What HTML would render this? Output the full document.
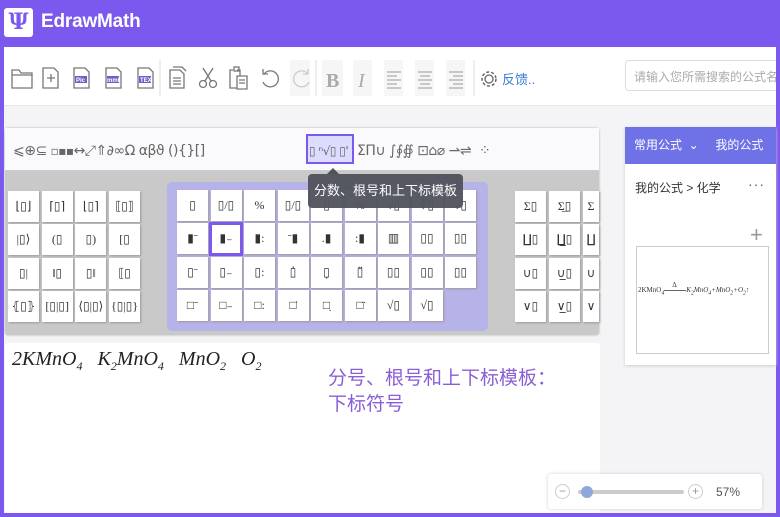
<!DOCTYPE html>
<html><head><meta charset="utf-8">
<style>
*{margin:0;padding:0;box-sizing:border-box}
body{width:780px;height:517px;overflow:hidden;background:#7b58ee;font-family:"Liberation Sans","Noto Sans CJK SC",sans-serif;position:relative}
.abs{position:absolute}
#main{left:4px;top:47px;width:772px;height:466px;background:#f4f4f6}
#tb{left:4px;top:47px;width:772px;height:59px;background:#fff;border-bottom:1px solid #e6e6e6}
.cell{position:absolute;width:31px;height:31px;background:#fff;box-shadow:1px 1px 2px #999;font-family:"Liberation Serif","DejaVu Sans",serif;font-size:12px;color:#333;display:flex;align-items:center;justify-content:center}
.sym{position:absolute;top:143px;font-size:14px;color:#666;font-family:"DejaVu Sans",sans-serif;letter-spacing:-0.5px}
</style></head><body>
<div class="abs" style="left:4px;top:8px;width:29px;height:29px;background:#fff;border-radius:3px;color:#7b58ee;font:bold 22px 'DejaVu Serif',serif;text-align:center;line-height:29px">Ψ</div>
<div class="abs" style="left:41px;top:11px;color:#fff;font-size:19px;font-weight:bold;letter-spacing:-0.2px">EdrawMath</div>
<div id="main" class="abs"></div>
<div id="tb" class="abs"></div>
<svg class="abs" style="left:0;top:60px" width="620" height="40">
 <g fill="none" stroke="#777" stroke-width="1.3">
  <path d="M12 10h7l2 3h11v15H12z"/><path d="M12 15h20"/>
  <path d="M43 8h11l4 4v16H43z"/><path d="M47 18h8M51 14v8"/>
  <path d="M74 8h11l4 4v16H74z"/><path d="M106 8h11l4 4v16h-15z"/><path d="M138 8h11l4 4v16h-15z"/>
  <path d="M170 10h10l4 4v14h-14z"/><path d="M173 7h9l4 4"/><path d="M173 18h8M173 21h8M173 24h8"/>
  <circle cx="203" cy="24" r="3.5"/><circle cx="213" cy="24" r="3.5"/><path d="M205 21l8-13M211 21l-8-13"/>
  <path d="M233 10h-3v18h7M237 10h3v6"/><rect x="234" y="7" width="5" height="4"/><path d="M237 16h10v13h-10z"/><path d="M239 20h6M239 23h6"/>
  <path d="M264 14a8 8 0 1 1-1 8M263 9v5h5"/>
 </g>
 <g fill="#6b5fc9"><rect x="75" y="16" width="12" height="7"/><rect x="107" y="16" width="12" height="7"/><rect x="139" y="16" width="12" height="7"/></g>
 <g fill="#fff" font-size="6" font-family="Liberation Sans" font-weight="bold"><text x="76" y="22">Pic</text><text x="107" y="22">mml</text><text x="140" y="22">TEX</text></g>
 <rect x="290" y="0" width="20" height="36" fill="#f6f6f6"/>
 <path d="M308 14a8 8 0 1 0 1 8M308 9v5h-5" fill="none" stroke="#ccc" stroke-width="1.3"/>
 <path d="M160 0v36M316 0v36M474 0v36" stroke="#ddd"/>
 <rect x="322" y="0" width="21" height="36" fill="#f6f6f6"/><rect x="353" y="0" width="19" height="36" fill="#f6f6f6"/><rect x="384" y="0" width="19" height="36" fill="#f6f6f6"/><rect x="415" y="0" width="19" height="36" fill="#f6f6f6"/><rect x="446" y="0" width="19" height="36" fill="#f6f6f6"/>
 <text x="326" y="27" font-family="Liberation Serif" font-weight="bold" font-size="20" fill="#aaa">B</text>
 <text x="358" y="27" font-family="Liberation Serif" font-style="italic" font-size="20" fill="#aaa">I</text>
 <g stroke="#999" stroke-width="1"><path d="M387 12h14M387 16h10M387 20h14M387 24h10M387 28h14"/><path d="M418 12h14M420 16h10M418 20h14M420 24h10M418 28h14"/><path d="M449 12h14M453 16h10M449 20h14M453 24h10M449 28h14"/></g>
 <circle cx="489" cy="19" r="4" fill="none" stroke="#666" stroke-width="1.3"/><circle cx="489" cy="19" r="7" fill="none" stroke="#666" stroke-width="1.5" stroke-dasharray="3 2"/>
</svg>
<div class="abs" style="left:502px;top:69px;font-size:13px;color:#3a7bd5">反馈..</div>
<div class="abs" style="left:625px;top:60px;width:151px;height:31px;border:1px solid #ddd;border-right:0;border-radius:4px 0 0 4px;background:#fff;font-size:12px;color:#aaa;padding:7px 0 0 8px;white-space:nowrap;overflow:hidden">请输入您所需搜索的公式名称</div>
<div class="abs" style="left:5px;top:128px;width:594px;height:207px;background:#c9c9c9;border-radius:3px;box-shadow:0 0 2px #aaa"></div>
<div class="abs" style="left:5px;top:128px;width:594px;height:43px;background:#fafafc;border-bottom:1px solid #ccc"></div>
<div class="sym" style="left:13px">⩽⊕⊆ <span style="font-size:12px">▫▪▪</span>↔⤢⇑∂∞Ω αβϑ (){}[]</div>
<div class="abs" style="left:306px;top:134px;width:48px;height:30px;border:2px solid #7b58ee;background:#dcdcff"></div>
<div class="sym" style="left:309px;font-size:12px;top:144px">▯ ⁿ√▯ ▯'</div>
<div class="sym" style="left:357px">ΣΠ∪ ∫∮∯ ⊡⌂⌀ ⇀⇌ &nbsp;⁘</div>
<div class="abs" style="left:167px;top:182px;width:321px;height:149px;background:#b6b3e8;border-radius:5px"></div>
<div id="cells"></div>
<div class="abs" style="left:308px;top:174px;width:155px;height:34px;background:#50535c;border-radius:4px;opacity:.95;color:#fff;font-size:13px;text-align:center;line-height:34px">分数、根号和上下标模板</div>
<div class="abs" style="left:327px;top:168px;width:0;height:0;border:6px solid transparent;border-bottom-color:#50535c;border-top:0"></div>
<div class="abs" style="left:5px;top:343px;width:595px;height:170px;background:#fff;border-radius:3px"></div>
<div class="abs" style="left:12px;top:348px;font-family:'Liberation Serif',serif;font-style:italic;font-size:20px;color:#222;white-space:nowrap">2KMnO<sub style="font-size:12px">4</sub>&nbsp;&nbsp; K<sub style="font-size:12px">2</sub>MnO<sub style="font-size:12px">4</sub>&nbsp;&nbsp; MnO<sub style="font-size:12px">2</sub>&nbsp;&nbsp; O<sub style="font-size:12px">2</sub></div>
<div class="abs" style="left:328px;top:366px;font-size:19px;color:#8a5fd6;line-height:26px">分号、根号和上下标模板：<br>下标符号</div>
<div class="abs" style="left:625px;top:127px;width:151px;height:238px;background:#fff;box-shadow:0 1px 3px #ccc"></div>
<div class="abs" style="left:625px;top:127px;width:151px;height:37px;background:#6f72e6;color:#fff;font-size:12px;line-height:37px;padding-left:9px;white-space:nowrap">常用公式 &nbsp;⌄&nbsp;&nbsp;&nbsp;&nbsp; 我的公式</div>
<div class="abs" style="left:635px;top:179px;font-size:12px;color:#333">我的公式 &gt; 化学</div>
<div class="abs" style="left:748px;top:176px;font-size:14px;color:#555;letter-spacing:1px">···</div>
<div class="abs" style="left:750px;top:222px;font-size:22px;color:#999;font-weight:200">+</div>
<div class="abs" style="left:636px;top:246px;width:133px;height:108px;border:1px solid #ccc"></div>
<div class="abs" style="left:638px;top:286px;font-family:'Liberation Serif',serif;font-size:7px;color:#333;white-space:nowrap">2KMnO<sub>4</sub><span style="display:inline-block;width:22px;border-top:1px solid #666;vertical-align:middle;position:relative"><span style="position:absolute;top:-10px;left:8px">Δ</span></span><i>K<sub>2</sub>MnO<sub>4</sub>+MnO<sub>2</sub>+O<sub>2</sub></i>↑</div>
<div class="abs" style="left:548px;top:474px;width:214px;height:35px;background:#fff;border-radius:3px;box-shadow:0 0 3px #ccc"></div>
<div class="abs" style="left:555px;top:484px;width:15px;height:15px;border:1px solid #ccc;border-radius:50%;color:#999;font-size:12px;line-height:12px;text-align:center">−</div>
<div class="abs" style="left:578px;top:490px;width:106px;height:4px;background:#ccc;border-radius:2px"></div>
<div class="abs" style="left:581px;top:486px;width:12px;height:12px;background:#8fa8d9;border-radius:50%"></div>
<div class="abs" style="left:688px;top:484px;width:15px;height:15px;border:1px solid #ccc;border-radius:50%;color:#999;font-size:12px;line-height:13px;text-align:center">+</div>
<div class="abs" style="left:716px;top:485px;font-size:12px;color:#555">57%</div>
<script>
var L=[['⌊▯⌋','⌈▯⌉','⌊▯⌉','⟦▯⟧'],['|▯⟩','(▯','▯)','[▯'],['▯|','‖▯','▯‖','⟦▯'],['⦃▯⦄','[▯|▯]','⟨▯|▯⟩','{▯|▯}']];
var M=[['▯','▯/▯','%','▯/▯','▯','%','√▯','∛▯','√▯'],['▮ˉ','▮₋','▮:','ˉ▮','.▮',':▮','▥','▯▯','▯▯'],['▯ˉ','▯₋','▯:','▯̇','▯̣','▯̈','▯▯','▯▯','▯▯'],['□ˉ','□₋','□:','□̇','□̣','□̈','√▯','√▯','']];
var R=[['Σ▯','Σ̲▯','Σ'],['∐▯','∐̲▯','∐'],['∪▯','∪̲▯','∪'],['∨▯','∨̲▯','∨']];
var ys=[191,224,258,291],h='';
function c(x,y,t,w){h+='<div class="cell" style="left:'+x+'px;top:'+y+'px'+(w?';width:'+w+'px':'')+'">'+t+'</div>';}
for(var r=0;r<4;r++){
 for(var i=0;i<4;i++)c(8+i*33.7,ys[r],L[r][i]);
 for(var i=0;i<9;i++){if(M[r][i]==='')continue;c(177+i*33.5,ys[r]-1,M[r][i]);}
 for(var i=0;i<3;i++)c(515+i*34,ys[r],R[r][i],i==2?16:0);
}
document.getElementById('cells').innerHTML=h;
</script>
<div class="abs" style="left:209px;top:222px;width:34px;height:34px;border:3px solid #7b58ee"></div>
</body></html>
